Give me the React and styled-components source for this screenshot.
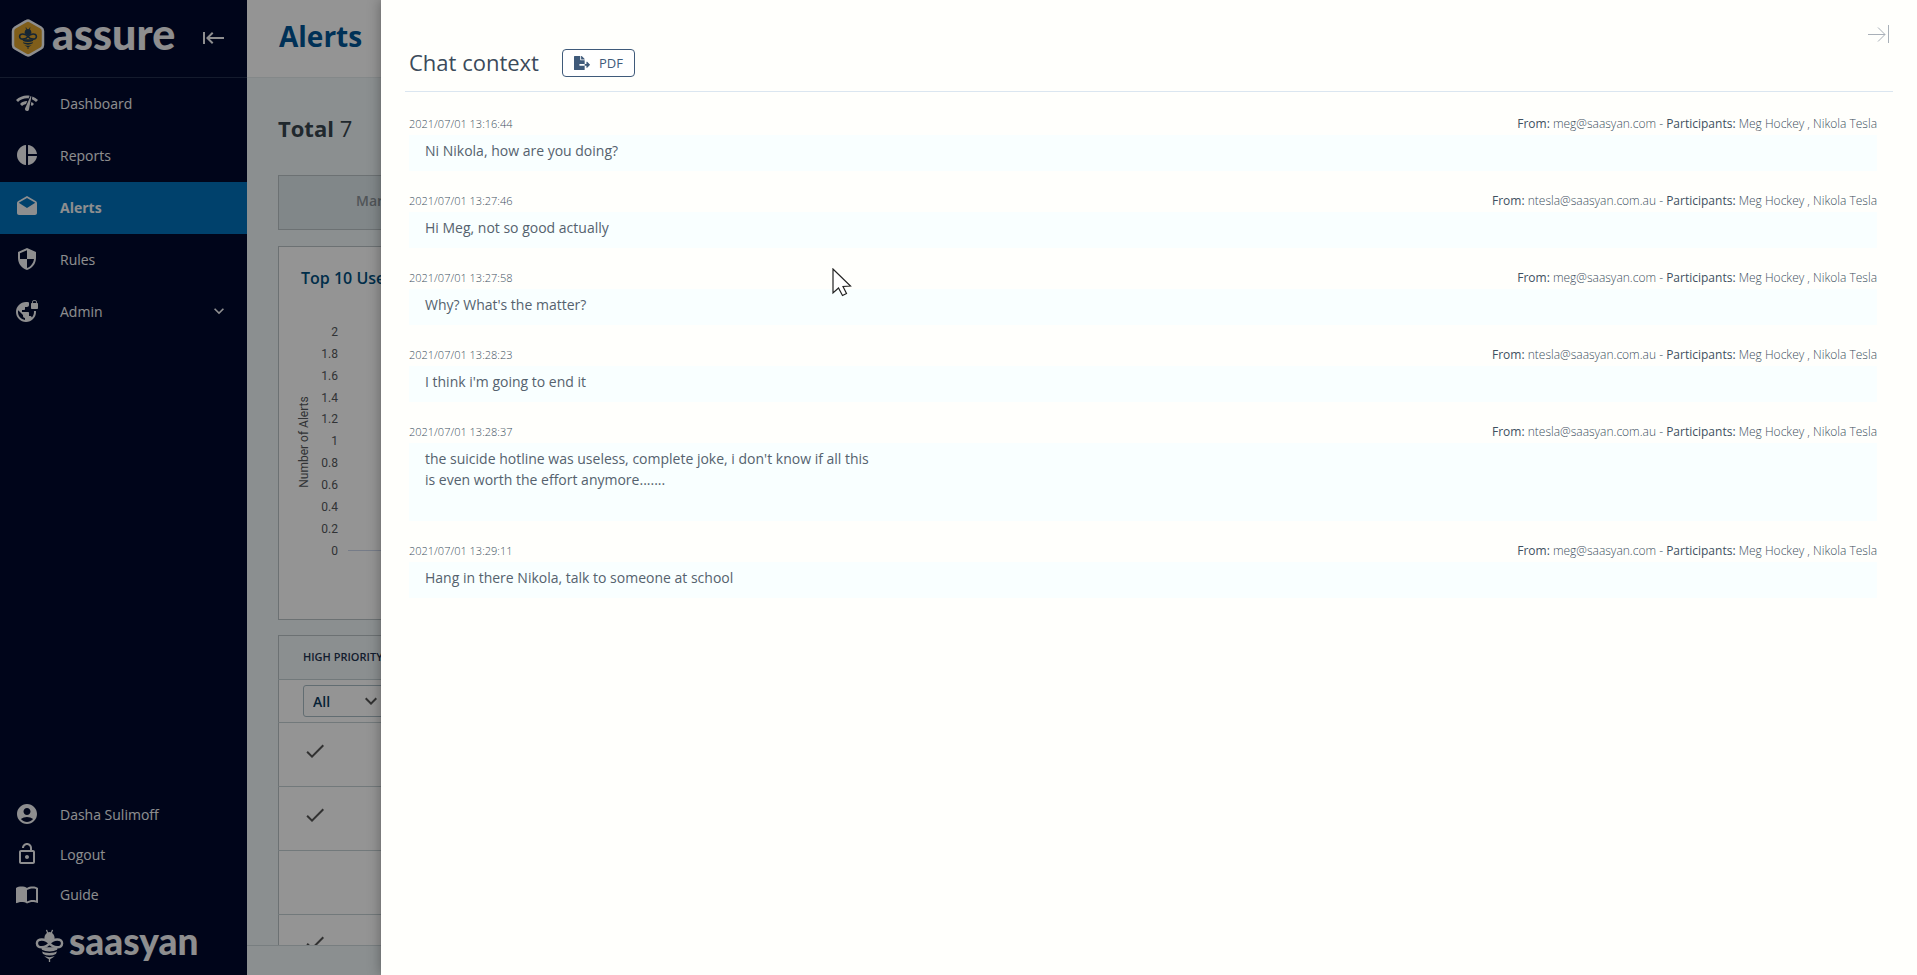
import React from "react";
import styled, { createGlobalStyle } from "styled-components";
import {
  MdNetworkCheck,
  MdPieChart,
  MdDrafts,
  MdSecurity,
  MdVpnLock,
  MdExpandMore,
  MdAccountCircle,
  MdOutlineLockOpen,
  MdKeyboardTab,
  MdCheck,
} from "react-icons/md";
import { FaFileExport } from "react-icons/fa";

const ADDRESSES = {
  meg: "meg@saasyan.com",
  nikola: "ntesla@saasyan.com.au",
};

const messages = [
  { time: "2021/07/01 13:16:44", from: ADDRESSES.meg, text: "Ni Nikola, how are you doing?" },
  { time: "2021/07/01 13:27:46", from: ADDRESSES.nikola, text: "Hi Meg, not so good actually" },
  { time: "2021/07/01 13:27:58", from: ADDRESSES.meg, text: "Why? What's the matter?" },
  { time: "2021/07/01 13:28:23", from: ADDRESSES.nikola, text: "I think i'm going to end it" },
  {
    time: "2021/07/01 13:28:37",
    from: ADDRESSES.nikola,
    text: "the suicide hotline was useless, complete joke, i don't know if all this\nis even worth the effort anymore.......\n\n",
  },
  {
    time: "2021/07/01 13:29:11",
    from: ADDRESSES.meg,
    text: "Hang in there Nikola, talk to someone at school",
  },
];

const ticks = ["2", "1.8", "1.6", "1.4", "1.2", "1", "0.8", "0.6", "0.4", "0.2", "0"];

const BookIcon = () => (
  <svg width="24" height="24" viewBox="0 0 24 24" fill="currentColor" aria-hidden="true">
    <path d="M21 5c-1.1-.35-2.3-.5-3.500-.5-1.950 0-4.050.4-5.500 1.500-1.450-1.100-3.550-1.500-5.500-1.500S2.450 4.900 1 6v14.650c0 .25.25.5.5.5.1 0 .15-.05.25-.05C3.100 20.450 5.050 20 6.500 20c1.950 0 4.050.4 5.500 1.500 1.350-.85 3.800-1.500 5.500-1.500 1.650 0 3.350.3 4.750 1.050.1.05.15.05.25.05.25 0 .5-.25.5-.5V6c-.6-.45-1.250-.75-2-1zm0 13.500c-1.100-.35-2.300-.5-3.500-.5-1.700 0-4.150.65-5.500 1.500V8c1.350-.85 3.800-1.500 5.500-1.500 1.200 0 2.400.15 3.500.5v11.500z" />
  </svg>
);

const Bee = ({ size, stripe }) => (
  <svg width={size} height={size} viewBox="0 0 32 38" fill="none" stroke="currentColor" aria-hidden="true">
    <path d="M14 5 12.500 1M18 5l1.500-4" strokeWidth="1.500" />
    <path d="M10 11a6 7.500 0 0 1 12 0l-6 4z" fill="currentColor" stroke="none" />
    <path d="M7 21h18c.5 6-3 12-9 14-6-2-9.500-8-9-14z" fill="currentColor" stroke="none" />
    <path d="M6 24.500q10 4.500 20 0M8 29.500q8 4 16 0" stroke={stripe} strokeWidth="1.800" />
    <path d="M16 34v4" strokeWidth="1.500" />
    <path
      d="M16 16.500C12 11 1.500 10 1.500 16.500s10.500 5.500 14.500 0c4-5.500 14.500-6.500 14.500 0s-10.500 5.500-14.500 0z"
      fill={stripe}
      strokeWidth="2.800"
    />
  </svg>
);

const Sidebar = () => (
  <SideNav>
    <Brand>
      <Badge>
        <svg width="34" height="38" viewBox="0 0 34 38" aria-hidden="true">
          <path
            d="M15 2.200q2-1.200 4 0l11 6.300q2 1.200 2 3.500v14q0 2.300-2 3.500l-11 6.300q-2 1.200-4 0L4 29.500q-2-1.200-2-3.500V12q0-2.300 2-3.500z"
            fill="#dca32d"
            stroke="#f4f5f7"
            strokeWidth="2.500"
          />
        </svg>
        <BadgeBee>
          <Bee size={22} stripe="#dca32d" />
        </BadgeBee>
      </Badge>
      <Wordmark $size={43}>assure</Wordmark>
      <CollapseButton aria-label="Collapse menu">
        <MdKeyboardTab size={24} />
      </CollapseButton>
    </Brand>
    <NavList>
      <NavItem href="#dashboard">
        <MdNetworkCheck size={24} />
        Dashboard
      </NavItem>
      <NavItem href="#reports">
        <MdPieChart size={24} />
        Reports
      </NavItem>
      <NavItem href="#alerts" $active>
        <MdDrafts size={24} />
        Alerts
      </NavItem>
      <NavItem href="#rules">
        <MdSecurity size={24} />
        Rules
      </NavItem>
      <NavItem href="#admin">
        <MdVpnLock size={24} />
        Admin
        <MdExpandMore size={20} className="more" />
      </NavItem>
    </NavList>
    <NavItem href="#profile" $compact>
      <MdAccountCircle size={24} />
      Dasha Sulimoff
    </NavItem>
    <NavItem href="#logout" $compact>
      <MdOutlineLockOpen size={24} />
      Logout
    </NavItem>
    <NavItem href="#guide" $compact>
      <BookIcon />
      Guide
    </NavItem>
    <Company>
      <Bee size={33} stripe="#000a2e" />
      <Wordmark $size={37}>saasyan</Wordmark>
    </Company>
  </SideNav>
);

const AlertsPage = () => (
  <Main>
    <PageHeader>
      <h1>Alerts</h1>
    </PageHeader>
    <Content>
      <Total>
        Total <span>7</span>
      </Total>
      <Toolbar>
        <button disabled>Mark</button>
      </Toolbar>
      <ChartCard>
        <h2>Top 10 Users</h2>
        <svg width="100%" height="260" role="img" aria-label="Number of Alerts">
          <text x="-150" y="9" transform="rotate(-90)" textAnchor="middle">
            Number of Alerts
          </text>
          {ticks.map((tick, i) => (
            <text key={tick} x="39" y={44 + Math.round(i * 21.85)} textAnchor="end">
              {tick}
            </text>
          ))}
          <path d="M49 258.500H1400" stroke="#ccd6eb" />
        </svg>
      </ChartCard>
      <Table>
        <thead>
          <tr>
            <th>HIGH PRIORITY</th>
          </tr>
          <tr>
            <td>
              <Filter>
                <select aria-label="High priority filter">
                  <option>All</option>
                </select>
                <MdExpandMore size={24} />
              </Filter>
            </td>
          </tr>
        </thead>
        <tbody>
          {[true, true, false, true].map((high, i) => (
            <tr key={i}>
              <td>{high && <MdCheck size={24} />}</td>
            </tr>
          ))}
        </tbody>
      </Table>
    </Content>
    <Footer />
  </Main>
);

const ChatContext = () => (
  <Drawer role="dialog" aria-label="Chat context">
    <CloseButton aria-label="Close">
      <svg width="22" height="18" viewBox="0 0 22 18" fill="none" stroke="currentColor">
        <path d="M0 9.500h17M10 2.500l7 7-7 7M20.500 0v18" />
      </svg>
    </CloseButton>
    <DrawerHeader>
      <h2>Chat context</h2>
      <PdfButton>
        <FaFileExport size={16} />
        PDF
      </PdfButton>
    </DrawerHeader>
    <Messages>
      {messages.map((message) => (
        <Message key={message.time}>
          <Meta>
            <time>{message.time}</time>
            <span>
              <b>From:</b> {message.from} - <b>Participants:</b> Meg Hockey , Nikola Tesla
            </span>
          </Meta>
          <Bubble>{message.text}</Bubble>
        </Message>
      ))}
    </Messages>
  </Drawer>
);

const App = () => {
  return (
    <>
      <GlobalStyle />
      <Layout>
        <Sidebar />
        <AlertsPage />
        <Shade />
        <ChatContext />
        <Cursor width="20" height="29" viewBox="0 0 20 29" aria-hidden="true">
          <path
            d="M1 1v24l5.500-5 4 7.500 4-2-3.500-7 7.500-.5z"
            fill="#fff"
            stroke="#222"
            strokeWidth="1.200"
          />
        </Cursor>
      </Layout>
    </>
  );
};

const GlobalStyle = createGlobalStyle`
  * {
    box-sizing: border-box;
    margin: 0;
    padding: 0;
  }

  body {
    font-family: "Open Sans", "Noto Sans", sans-serif;
    font-size: 14px;
    color: #40505f;
    overflow: hidden;
  }

  button,
  select {
    font: inherit;
    color: inherit;
  }
`;

const Layout = styled.div`
  position: relative;
  display: flex;
  height: 100vh;
  overflow: hidden;
`;

const SideNav = styled.nav`
  width: 247px;
  flex: none;
  display: flex;
  flex-direction: column;
  background: #000a2e;
  color: #f4f5f7;
`;

const Brand = styled.div`
  height: 78px;
  display: flex;
  align-items: center;
  padding: 0 22px 2px 11px;
  border-bottom: 1px solid #24304f;
`;

const Badge = styled.div`
  display: grid;
  place-items: center;
  margin-right: 7px;

  > * {
    grid-area: 1 / 1;
  }
`;

const BadgeBee = styled.span`
  display: flex;
  color: #24405a;
`;

const Wordmark = styled.span`
  font-family: Lato, sans-serif;
  font-weight: 900;
  font-size: ${(props) => props.$size}px;
  line-height: 40px;
  padding-bottom: 8px;
`;

const CollapseButton = styled.button`
  display: flex;
  margin-left: auto;
  border: 0;
  background: none;

  svg {
    transform: scaleX(-1);
  }
`;

const NavList = styled.div`
  flex: 1;
`;

const NavItem = styled.a`
  display: flex;
  align-items: center;
  gap: 21px;
  height: ${(props) => (props.$compact ? 40 : 52)}px;
  padding: 0 18px 2px 15px;
  color: inherit;
  text-decoration: none;
  background: ${(props) => (props.$active ? "#0070ba" : "none")};
  font-weight: ${(props) => (props.$active ? 700 : 400)};

  .more {
    margin-left: auto;
  }
`;

const Company = styled.div`
  display: flex;
  align-items: center;
  gap: 3px;
  height: 60px;
  padding-left: 33px;
`;

const Main = styled.main`
  flex: 1;
  min-width: 0;
  display: flex;
  flex-direction: column;
  background: #f0f7f8;
`;

const PageHeader = styled.header`
  height: 78px;
  flex: none;
  padding: 15px 32px;
  background: #fff;
  border-bottom: 1px solid #e4eaec;

  h1 {
    font-size: 28px;
    line-height: 42px;
    color: #005596;
  }
`;

const Content = styled.div`
  flex: 1;
  min-height: 0;
  overflow: hidden;
  padding: 33px 31px 0;
`;

const Total = styled.p`
  font-size: 22px;
  line-height: 34px;
  font-weight: 700;
  color: #38454f;

  span {
    font-weight: 400;
  }
`;

const Toolbar = styled.div`
  margin: 30px 0 16px;
  height: 55px;
  border: 1px solid #bac3c7;
  background: #dfe8ec;

  button {
    height: 100%;
    padding: 0 0 4px 77px;
    border: 0;
    background: none;
    font-weight: 600;
    color: #8b9398;
  }
`;

const ChartCard = styled.section`
  height: 374px;
  padding: 17px 20px;
  background: #fff;
  border: 1px solid #bac3c7;

  h2 {
    padding-left: 2px;
    font-size: 16px;
    line-height: 28px;
    font-weight: 600;
    color: #005080;
  }

  svg {
    display: block;
    overflow: visible;
    font-family: Roboto, sans-serif;
    font-size: 12px;
    fill: #55595c;
  }
`;

const Table = styled.table`
  width: 100%;
  margin-top: 15px;
  border-collapse: collapse;
  background: #fff;
  border: 1px solid #bac3c7;

  th,
  td {
    padding: 0 24px 8px;
    height: 64px;
    text-align: left;
    border-bottom: 1px solid #c4d0d4;
  }

  th {
    height: 44px;
    padding-bottom: 2px;
    font-size: 11px;
    font-weight: 600;
    background: #f0f7f8;
    color: #1f3350;
  }

  thead td {
    height: 43px;
    padding-bottom: 0;
  }

  svg {
    display: block;
    color: #555;
  }
`;

const Filter = styled.div`
  position: relative;
  width: 92px;

  select {
    display: block;
    appearance: none;
    width: 100%;
    height: 32px;
    padding-left: 9px;
    border: 1px solid #a9bcc4;
    border-radius: 3px;
    background: #fff;
    color: #0c3a5e;
    font-weight: 600;
  }

  svg {
    position: absolute;
    top: 4px;
    right: 12px;
    pointer-events: none;
  }
`;

const Footer = styled.footer`
  height: 30px;
  flex: none;
  border-top: 1px solid #cfdadd;
`;

const Shade = styled.div`
  position: absolute;
  inset: 0;
  background: rgba(0, 0, 0, 0.42);
`;

const Drawer = styled.aside`
  position: absolute;
  inset: 0 0 0 381px;
  padding: 36px 24px 0;
  background: #fffffc;
  box-shadow: 0 0 12px rgba(0, 0, 0, 0.35);
`;

const CloseButton = styled.button`
  position: absolute;
  top: 25px;
  right: 27px;
  display: flex;
  border: 0;
  background: none;
  color: #a9b0b8;
`;

const DrawerHeader = styled.header`
  display: flex;
  align-items: center;
  gap: 23px;
  height: 56px;
  padding: 0 4px 2px;
  border-bottom: 1px solid #dbe6f0;

  h2 {
    padding-bottom: 2px;
    font-size: 22px;
    line-height: 32px;
    font-weight: 400;
    color: #3b4a5a;
  }
`;

const PdfButton = styled.button`
  display: flex;
  align-items: center;
  gap: 9px;
  height: 28px;
  padding: 0 11px;
  border: 1px solid #3f5a7a;
  border-radius: 4px;
  background: #fff;
  color: #3f5a7a;
  font-size: 13px;
`;

const Messages = styled.div`
  padding: 21px 16px 0 4px;
`;

const Message = styled.article`
  margin-bottom: 19px;
`;

const Meta = styled.div`
  display: flex;
  justify-content: space-between;
  font-size: 12px;
  line-height: 22px;
  font-weight: 300;

  time {
    font-size: 11px;
  }

  b {
    font-weight: 400;
  }
`;

const Bubble = styled.p`
  padding: 5px 16px 10px;
  line-height: 21px;
  color: #55626e;
  background: #f9ffff;
  white-space: pre-line;
`;

const Cursor = styled.svg`
  position: absolute;
  top: 268px;
  left: 832px;
`;

export default App;
